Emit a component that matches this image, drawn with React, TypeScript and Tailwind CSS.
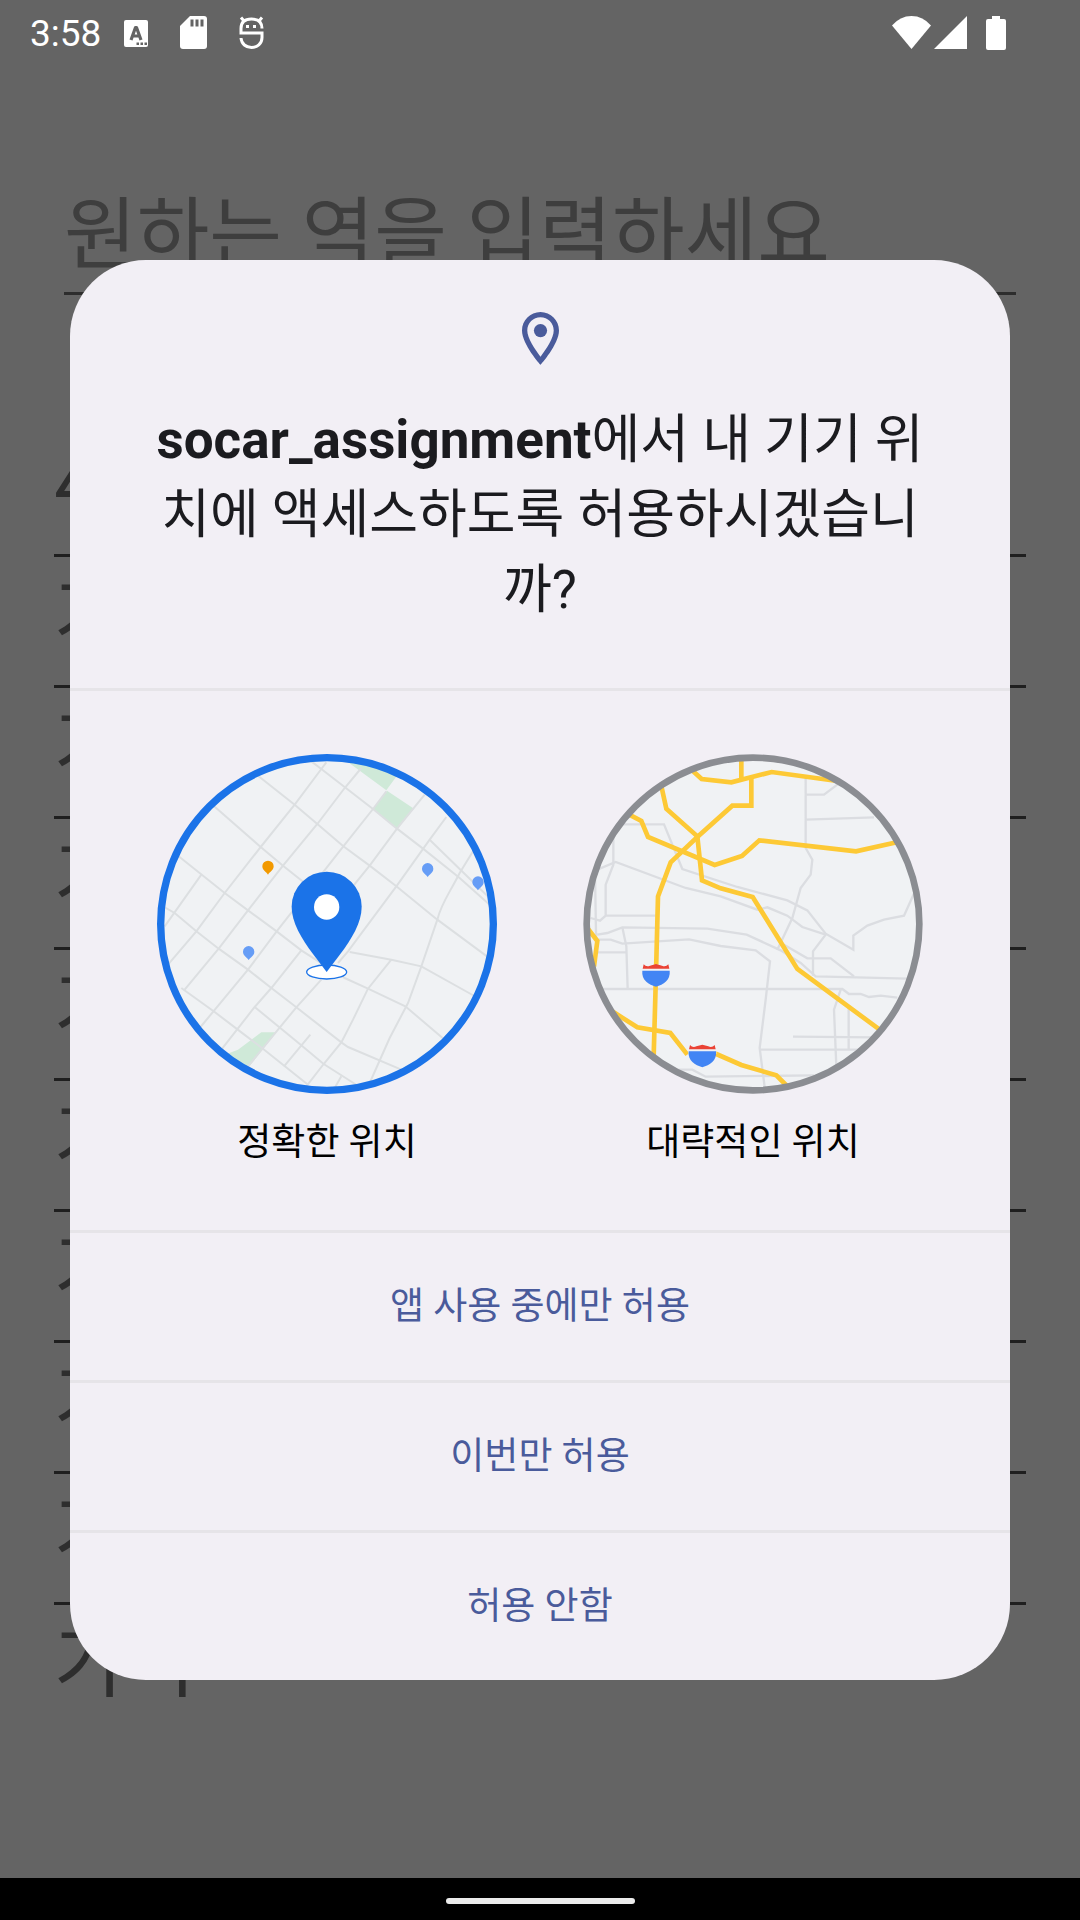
import React from "react";

const stations = ["가나", "가나", "가나", "가나", "가나", "가나", "가나", "가나", "가나"];

const StatusBar = () => (
  <header className="flex h-[66px] items-center justify-between pr-[74px] pl-[30px] text-white">
    <div className="flex items-center">
      <span className="w-[72px] font-[Roboto,sans-serif] text-[37px] leading-none">3:58</span>
      <svg width="24" height="27" viewBox="0 0 24 27" className="ml-[22px]">
        <path fill="#fff" d="M2 0h20a2 2 0 0 1 2 2v23a2 2 0 0 1-2 2H2a2 2 0 0 1-2-2V2a2 2 0 0 1 2-2z" />
        <path fill="none" stroke="#646464" strokeWidth="3.2" strokeLinejoin="round" d="M7 20 11.500 7.500h1L17 20M8.500 16h7" />
        <path fill="#646464" d="M12.500 22.500h2.500v2.500h-2.500zM16.500 22.500h2.500v2.500h-2.500zM20.500 22.500H23v2.500h-2.500z" />
      </svg>
      <svg width="27" height="34" viewBox="0 0 27 34" className="ml-[32px]">
        <path fill="#fff" d="M10 0h14a3 3 0 0 1 3 3v27a3 3 0 0 1-3 3H3a3 3 0 0 1-3-3V10z" />
        <path fill="#646464" d="M10.500 3.500h3v7h-3zM15.500 3.500h3v7h-3zM20.500 3.500h3v7h-3z" />
      </svg>
      <svg width="26" height="34" viewBox="0 0 26 34" className="ml-[32px]">
        <g fill="none" stroke="#fff" strokeWidth="3">
          <path d="M23 12.500C23 6 19 3 12.500 3S2 6 2 12.500V17h21v4.500C23 28 18 31.500 12.500 31.500S2.500 28 2 22" />
          <path d="M2 1.500 5 5M23 1.500 20 5" />
        </g>
        <path fill="#fff" d="M7 9h3v3H7zM14 9h3v3h-3z" />
      </svg>
    </div>
    <div className="flex items-center">
      <svg width="39" height="34" viewBox="0 0 39 34">
        <path fill="#fff" d="M0 9.500Q8 0 19.500 0T39 9.500L19.500 33z" />
      </svg>
      <svg width="33" height="34" viewBox="0 0 33 34" className="ml-[3px]">
        <path fill="#fff" d="M33 0v33H0z" />
      </svg>
      <svg width="20" height="34" viewBox="0 0 20 34" className="ml-[19px]">
        <path fill="#fff" d="M6 0h8v3h4a2 2 0 0 1 2 2v27a2 2 0 0 1-2 2H2a2 2 0 0 1-2-2V5a2 2 0 0 1 2-2h4z" />
      </svg>
    </div>
  </header>
);

const PreciseMap = () => (
  <svg viewBox="37 43 1020 1020" className="size-[340px]" aria-hidden="true">
    <defs>
      <clipPath id="precise">
        <circle cx="547" cy="553" r="495" />
      </clipPath>
    </defs>
    <g clipPath="url(#precise)">
      <path fill="#f0f2f4" d="M0 0h1110v1110H0z" />
      <path fill="#cfe9d8" d="M600 60 725 152 770 90 700 50zM727 153 808 207 757 267 685 208zM240 945 280 930 350 878H395L310 985z" />
      <g fill="none" stroke="#dcdfe1" strokeWidth="6">
        <path d="M500 65 530 88 685 208 757 267 835 327 945 415 1040 500" />
        <path d="M340 108 450 195 518 253 596 320 675 378 755 440 878 540 1040 660" />
        <path d="M205 197 348 322 415 378 480 430M100 348 240 460 310 512 396 575 470 632 600 715 670 747 782 800 900 900" />
        <path d="M55 500 90 520 155 575 222 627 310 690 380 745 455 803 590 908 610 922 770 990" />
        <path d="M110 745 210 817 295 882 352 925 490 1035M330 802 468 915 537 973 650 1045" />
        <path d="M545 68 530 88 450 195 348 322 240 460 155 575 70 675M650 85 600 145 518 253 415 378 310 512 222 627 120 750" />
        <path d="M725 155 685 208 596 320 396 575 310 690 165 865M840 165 757 267 675 378 560 520" />
        <path d="M905 232 855 300 755 440 610 635 580 670M985 335 945 400C915 460 890 490 878 540L830 680 790 790 735 895 675 1030" />
        <path d="M615 637 740 660 830 680 1000 775M740 660 670 747 625 840 590 908 537 973 485 1040" />
        <path d="M530 720 455 803 400 870 310 980M470 632 380 745 330 802 230 930M60 560 170 405M855 300 945 388 1040 480M497 885 418 980M590 1010 570 1045" />
      </g>
    </g>
    <circle cx="547" cy="553" r="499" fill="none" stroke="#1b73e8" strokeWidth="22" />
    <path fill="#f29900" d="M370 405c-4-8-17-12-17-25a17 17 0 0 1 34 0c0 13-13 17-17 25z" />
    <path
      fill="#669df6"
      d="M849 412c-4-8-17-12-17-25a17 17 0 0 1 34 0c0 13-13 17-17 25zM1000 452c-4-8-17-12-17-25a17 17 0 0 1 34 0c0 13-13 17-17 25zM312 661c-4-8-17-12-17-25a17 17 0 0 1 34 0c0 13-13 17-17 25z"
    />
    <ellipse cx="546" cy="697" rx="60" ry="21" fill="#fff" stroke="#1b73e8" strokeWidth="4" />
    <path fill="#1b73e8" d="M546 697 505 643C470 596 441 548 441 501a105 105 0 0 1 210 0C651 548 622 596 587 643z" />
    <circle cx="546" cy="502" r="38" fill="#fff" />
  </svg>
);

const Shield = ({ x, y }: { x: number; y: number }) => (
  <g transform={`translate(${x} ${y})`}>
    <path fill="#f0f2f4" d="M-42-26h84V0h-84z" />
    <path fill="#ea4335" d="M-37-27Q-29-18-18-23L0-28 18-23Q29-18 37-27L40-14H-40z" />
    <path fill="#4285f4" d="M-41-8h82C44 20 22 34 0 40-22 34-44 20-41-8z" />
  </g>
);

const ApproximateMap = () => (
  <svg viewBox="37 43 1020 1020" className="size-[340px]" aria-hidden="true">
    <defs>
      <clipPath id="approximate">
        <circle cx="547" cy="553" r="495" />
      </clipPath>
    </defs>
    <g clipPath="url(#approximate)">
      <path fill="#f0f2f4" d="M0 0h1110v1110H0z" />
      <g fill="none" stroke="#dbdde1" strokeWidth="7">
        <path d="M705 110V325L725 360 720 405 690 445 665 535 620 630M705 165H760L800 135M705 240 910 233" />
        <path d="M150 254H280L335 388 500 442 650 482 710 512 765 582 848 630V588L890 558 940 540 1000 528 1035 450" />
        <path d="M80 390 135 367 345 445 450 470 560 510 590 503 650 528 695 562 765 585 727 635V708" />
        <path d="M128 295V375L105 435V528L88 543 60 535M105 528H255M73 400 77 640M80 585 110 580 155 563 410 567 528 585 630 632 690 670 735 710 1010 717" />
        <path d="M80 600H120L155 612 355 599 450 619 555 632 598 665 585 780 567 925 583 1050M640 615 710 656H780L850 710" />
        <path d="M75 638H165M155 563 167 620 171 748M95 748H815L835 763H870L895 772 930 768 980 774" />
        <path d="M810 750 790 810 797 980M834 805V930M667 891 910 893M567 930H880M320 990H365L405 1011 730 1007" />
      </g>
      <g fill="none" stroke="#fdc935" strokeWidth="14">
        <path d="M360 88 393 118 482 128 603 97 800 124M512 60V120M542 112V198H485L380 292 300 368 262 470 256 700 249 950" />
        <path d="M270 130 287 207 380 290 394 422 450 446 546 472 680 688 930 872" />
        <path d="M170 222 212 244 232 292 432 376 514 349 566 302 856 335 985 306" />
        <path d="M50 565 80 604 70 680M120 812 200 863 299 880 350 945M430 940 512 976 617 1007 655 1045" />
      </g>
      <Shield x={256} y={701} />
      <Shield x={395} y={943} />
    </g>
    <circle cx="547" cy="553" r="499" fill="none" stroke="#8b8d92" strokeWidth="20" />
  </svg>
);

const PermissionDialog = () => {
  const [accuracy, setAccuracy] = React.useState("precise");

  return (
    <div
      role="dialog"
      aria-labelledby="permission-title"
      className="absolute inset-x-[70px] top-[260px] overflow-hidden rounded-[76px] bg-[#f2eff5]"
    >
      <div className="flex flex-col items-center px-[80px] pt-[52px] pb-[60px]">
        <svg width="37" height="53" viewBox="5 2 14 20" aria-hidden="true">
          <path
            fill="#4a5b9b"
            d="M12 2C8.130 2 5 5.130 5 9c0 5.250 7 13 7 13s7-7.750 7-13c0-3.870-3.130-7-7-7zM7 9c0-2.760 2.240-5 5-5s5 2.240 5 5c0 2.880-2.880 7.190-5 9.880C9.920 16.210 7 11.850 7 9z"
          />
          <circle cx="12" cy="9" r="2.500" fill="#4a5b9b" />
        </svg>
        <h1 id="permission-title" className="mt-[38px] text-center text-[53px] leading-[75px] break-all text-[#1b1b1f]">
          <b>socar_assignment</b>에서 내 기기 위치에 액세스하도록 허용하시겠습니까?
        </h1>
      </div>

      <div className="grid grid-cols-2 border-t-[3px] border-[#e6e4e8] px-[44px] pt-[63px] pb-[60px]">
        <label className="flex flex-col items-center text-[37px] leading-[54px] text-black">
          <input
            type="radio"
            name="accuracy"
            className="sr-only"
            checked={accuracy === "precise"}
            onChange={() => setAccuracy("precise")}
          />
          <PreciseMap />
          <span className="mt-[22px]">정확한 위치</span>
        </label>
        <label className="flex flex-col items-center text-[37px] leading-[54px] text-black">
          <input
            type="radio"
            name="accuracy"
            className="sr-only"
            checked={accuracy === "approximate"}
            onChange={() => setAccuracy("approximate")}
          />
          <ApproximateMap />
          <span className="mt-[22px]">대략적인 위치</span>
        </label>
      </div>

      <div className="flex flex-col text-[37px] text-[#4a5b9b]">
        <button type="button" className="h-[150px] border-t-[3px] border-[#e6e4e8]">앱 사용 중에만 허용</button>
        <button type="button" className="h-[150px] border-t-[3px] border-[#e6e4e8]">이번만 허용</button>
        <button type="button" className="h-[150px] border-t-[3px] border-[#e6e4e8]">허용 안함</button>
      </div>
    </div>
  );
};

const App = () => {
  return (
    <div className="relative flex min-h-screen flex-col bg-[#646464] font-[Roboto,'Noto_Sans_CJK_KR',sans-serif]">
      <StatusBar />

      <main className="flex-1 px-[54px]">
        <div className="px-[10px] pt-[106px]">
          <input
            type="text"
            aria-label="역 검색"
            placeholder="원하는 역을 입력하세요"
            className="block h-[123px] w-full border-b-[3px] border-[#2d2d2d] pt-[8px] text-[79px] placeholder:text-[#3e3e3e]"
          />
        </div>
        <h2 className="mt-[131px] h-[128px] text-[79px] leading-[114px] text-[#2e2e2e]">4호선</h2>
        <ul>
          {stations.map((name, i) => (
            <li key={i} className="h-[131px] border-t-[3px] border-[#1f1f1f] text-[79px] leading-[118px] text-[#2e2e2e]">
              {name}
            </li>
          ))}
        </ul>
      </main>

      <footer className="flex h-[42px] items-center justify-center bg-black pt-[4px]">
        <div className="h-[6px] w-[189px] rounded-full bg-[#ebebeb]" />
      </footer>

      <PermissionDialog />
    </div>
  );
};

export default App;
